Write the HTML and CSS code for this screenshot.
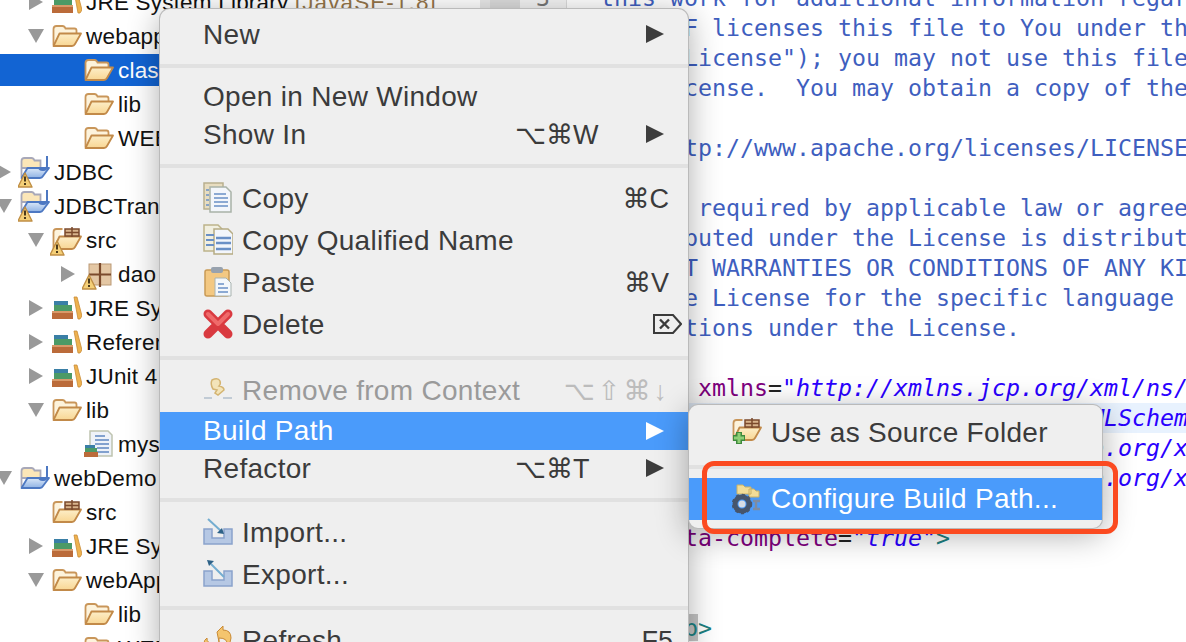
FILE: index.html
```html
<!DOCTYPE html>
<html lang="en">
<head>
<meta charset="utf-8">
<title>Eclipse context menu</title>
<link rel="stylesheet" href="styles.css">
</head>
<body>
<svg class="defs" width="0" height="0" aria-hidden="true">
  <defs>
    <linearGradient id="fg" x1="0" y1="0" x2="0" y2="1"><stop offset="0" stop-color="#fdeec8"/><stop offset="1" stop-color="#f8d693"/></linearGradient>
    <linearGradient id="bl" x1="0" y1="0" x2="0" y2="1"><stop offset="0" stop-color="#dbe8f8"/><stop offset="1" stop-color="#8fb2e4"/></linearGradient>
    <symbol id="folder" viewBox="0 0 30 24">
      <path d="M1.500 21V5q0-3 3-3h6q2 0 3 2.500h9q2 0 2 2V9" fill="#fdf3dc" stroke="#c9965a" stroke-width="1.800"/>
      <path d="M1.500 22 7.500 9.500H29L23 20q-1 2-3 2Z" fill="url(#fg)" stroke="#c28a49" stroke-width="1.800" stroke-linejoin="round"/>
    </symbol>
    <symbol id="warn" viewBox="0 0 32 32">
      <path d="M7 17 14 31H0Z" fill="#f4cf77" stroke="#c08f45" stroke-width="1.400" stroke-linejoin="round"/>
      <path d="M7 20.500v5M7 27v2" stroke="#3a2a12" stroke-width="1.800"/>
    </symbol>
    <symbol id="project" viewBox="0 0 30 24">
      <path d="M1.500 21V5q0-3 3-3h7q2 0 3 2.500h6V12H1.500Z" fill="#fbe6b8" stroke="#a8a8b8" stroke-width="1.800"/>
      <path d="M1.500 22 7.500 12H29L23 20q-1 2-3 2Z" fill="url(#bl)" stroke="#4d78c2" stroke-width="1.800" stroke-linejoin="round"/>
      <path d="M27 0v10q0 4-4 4t-4-3" fill="none" stroke="#4d78c2" stroke-width="2"/>
    </symbol>
    <symbol id="project-warn" viewBox="0 0 32 32">
      <use href="#project" x="2" y="0" width="30" height="24"/><use href="#warn" width="32" height="32"/>
    </symbol>
    <symbol id="jars" viewBox="0 0 30 24">
      <path d="M22 1h3l5 19-2 3h-2Z" fill="#eeb24f" stroke="#c98a35" stroke-width=".8"/>
      <rect x="2" y="5" width="14" height="4" fill="#3a7fa6"/>
      <rect x="2" y="9" width="18" height="6" fill="#4c9a66"/>
      <rect x="0" y="15" width="21" height="8" fill="#bb6b3a"/>
      <rect x="0" y="15" width="21" height="2" fill="#d89a6a"/>
    </symbol>
    <symbol id="pkg" viewBox="0 0 30 24">
      <rect x="5" y="1" width="22" height="21" fill="#e4c7a4" stroke="#bb9a76"/>
      <path d="M16 0v24M5 11.500h22" stroke="#7b4a2c" stroke-width="2.200"/>
    </symbol>
    <symbol id="pkg-warn" viewBox="0 0 32 32">
      <use href="#pkg" x="2" y="5" width="30" height="24"/><use href="#warn" width="32" height="32"/>
    </symbol>
    <symbol id="src" viewBox="0 0 30 24">
      <path d="M1.500 21V5q0-3 3-3h6" fill="#fdf3dc" stroke="#c9965a" stroke-width="1.800"/>
      <path d="M1.500 22 7.500 9.500H29L23 20q-1 2-3 2Z" fill="url(#fg)" stroke="#c28a49" stroke-width="1.800" stroke-linejoin="round"/>
      <path d="M13 2h14v7H13zM20 0v10M13 5.500h14" fill="#d8b48c" stroke="#7b4a2c" stroke-width="1.500"/>
    </symbol>
    <symbol id="src-warn" viewBox="0 0 32 32">
      <use href="#src" x="2" y="3" width="30" height="24"/><use href="#warn" width="32" height="32"/>
    </symbol>
    <symbol id="jarfile" viewBox="0 0 30 28">
      <path d="M6 1h18l4 4v21H6Z" fill="#eef2f8" stroke="#bfc4b0" stroke-width="1.500"/>
      <path d="M11 6h10M11 10h14M11 14h14M13 18h12M13 22h12" stroke="#5f86c0" stroke-width="1.500"/>
      <rect x="1" y="15" width="10" height="3" fill="#3a7fa6"/>
      <rect x="1" y="18" width="12" height="4" fill="#4c9a66"/>
      <rect x="0" y="22" width="14" height="5" fill="#bb6b3a"/>
    </symbol>
    <symbol id="m-copy" viewBox="0 0 30 32">
      <path d="M1 1h19v26H1Z" fill="#e8ddc0" stroke="#b9b08e" stroke-width="1.500"/>
      <path d="M7 5h16l5 5v20H7Z" fill="#f3f6fb" stroke="#a9b3a8" stroke-width="1.500"/>
      <path d="M11 12h12M11 16h14M11 20h14M11 24h14M3 8h3M3 13h3M3 18h3M3 23h3" stroke="#6a90c6" stroke-width="1.600"/>
    </symbol>
    <symbol id="m-copyq" viewBox="0 0 30 32">
      <path d="M1 1h14l4 4v22H1Z" fill="#f1efe0" stroke="#bdb48a" stroke-width="1.500"/>
      <path d="M11 5h14l5 5v20H11Z" fill="#f3f6fb" stroke="#b6ac84" stroke-width="1.500"/>
      <path d="M3 11h8M3 16h8M3 21h8" stroke="#6a90c6" stroke-width="2"/>
      <path d="M13 14h15M13 19h15M13 25h15" stroke="#6a90c6" stroke-width="2.400"/>
    </symbol>
    <symbol id="m-paste" viewBox="0 0 30 32">
      <rect x="2" y="4" width="24" height="26" rx="2" fill="#f3c882" stroke="#c99a56" stroke-width="1.500"/>
      <rect x="8" y="1" width="12" height="6" rx="2" fill="#98a2ae"/>
      <path d="M12 12h11l5 5v13H12Z" fill="#f3f7fb" stroke="#aab4b0"/>
      <path d="M15 18h6M15 22h10M15 26h10" stroke="#6a90c6" stroke-width="1.600"/>
    </symbol>
    <symbol id="m-del" viewBox="0 0 30 30">
      <path d="M5 5 25 25M25 5 5 25" stroke="#d93a40" stroke-width="9" stroke-linecap="round"/>
      <path d="M5 5 15 15M25 5 15 15" stroke="#ef6a6a" stroke-width="4" stroke-linecap="round"/>
    </symbol>
    <symbol id="m-remove" viewBox="0 0 30 28">
      <path d="M1 22h8M20 22h9" stroke="#a9b8c8" stroke-width="1.500"/>
      <path d="M9 4q6-3 8 1 1 3-1 5 5 1 5 4l-6 5-3-2 2-3-4-1q-3-5-1-9Z" fill="#f4e3b0" stroke="#d0aa5c" stroke-width="1.500"/>
    </symbol>
    <symbol id="m-import" viewBox="0 0 30 28">
      <path d="M1 11h8v9h12v-9h8v15H1Z" fill="#b6c8e4" stroke="#8aa3cc" stroke-width="1.500"/>
      <path d="M5 1l13 12" stroke="#74add0" stroke-width="2"/>
      <path d="M21 16l-7-1 5-5Z" fill="#2e6288"/>
    </symbol>
    <symbol id="m-export" viewBox="0 0 30 28">
      <path d="M1 11h8v9h12v-9h8v15H1Z" fill="#b6c8e4" stroke="#8aa3cc" stroke-width="1.500"/>
      <path d="M8 4l13 13" stroke="#74add0" stroke-width="2"/>
      <path d="M4 0l7 1-5 5Z" fill="#2e6288"/>
    </symbol>
    <symbol id="m-refresh" viewBox="0 0 30 28">
      <path d="M14 6 20 0v4q8 0 8 8 0 5-4 7 1-7-8-7v4Z" fill="#f4c56e" stroke="#c98a35"/>
      <path d="M14 22 8 28v-4q-8 0-7-7 0-3 3-5-1 6 10 6Z" fill="#f4c56e" stroke="#c98a35"/>
    </symbol>
    <symbol id="m-source" viewBox="0 0 30 28">
      <use href="#src" width="30" height="24"/>
      <path d="M7 14v12M1 20h12" stroke="#3f8a3e" stroke-width="6"/>
      <path d="M7 15v10M2 20h10" stroke="#8fcf76" stroke-width="3"/>
    </symbol>
    <symbol id="m-config" viewBox="0 0 30 30">
      <path d="M5 1h6l2 2h6v7H5ZM17 5h5l2 2h3v6H17Z" fill="#f1dc98" stroke="#c9b066"/>
      <circle cx="10" cy="20" r="7" fill="none" stroke="#46556c" stroke-width="5"/>
      <circle cx="10" cy="20" r="9" fill="none" stroke="#46556c" stroke-width="2.500" stroke-dasharray="3 3"/>
      <circle cx="10" cy="20" r="3.500" fill="#d5dce6"/>
      <path d="M21 17h7M21 25h7M24 17v8" stroke="#7d8ca2" stroke-width="2.500"/>
    </symbol>
    <symbol id="k-del" viewBox="0 0 29 20">
      <path d="M1 1h19l8 9-8 9H1Z" fill="none" stroke="#3b3b3b" stroke-width="2"/>
      <path d="M7 5.500 16 14.500M16 5.500 7 14.500" stroke="#3b3b3b" stroke-width="2.400"/>
    </symbol>
  </defs>
</svg>

<div class="app">
  <nav class="tree">
    <div class="row l1"><i class="tw closed"></i><svg class="ico"><use href="#jars"/></svg><span>JRE System Library <em class="deco">[JavaSE-1.8]</em></span></div>
    <div class="row l1"><i class="tw open"></i><svg class="ico"><use href="#folder"/></svg><span>webapp</span></div>
    <div class="row l2 selected"><i class="tw"></i><svg class="ico"><use href="#folder"/></svg><span>classes</span></div>
    <div class="row l2"><i class="tw"></i><svg class="ico"><use href="#folder"/></svg><span>lib</span></div>
    <div class="row l2"><i class="tw"></i><svg class="ico"><use href="#folder"/></svg><span>WEB-INF</span></div>
    <div class="row l0"><i class="tw closed"></i><svg class="ico w"><use href="#project-warn"/></svg><span>JDBC</span></div>
    <div class="row l0"><i class="tw open"></i><svg class="ico w"><use href="#project-warn"/></svg><span>JDBCTransaction</span></div>
    <div class="row l1"><i class="tw open"></i><svg class="ico w"><use href="#src-warn"/></svg><span>src</span></div>
    <div class="row l2"><i class="tw closed"></i><svg class="ico w"><use href="#pkg-warn"/></svg><span>dao</span></div>
    <div class="row l1"><i class="tw closed"></i><svg class="ico"><use href="#jars"/></svg><span>JRE System Library</span></div>
    <div class="row l1"><i class="tw closed"></i><svg class="ico"><use href="#jars"/></svg><span>Referenced Libraries</span></div>
    <div class="row l1"><i class="tw closed"></i><svg class="ico"><use href="#jars"/></svg><span>JUnit 4</span></div>
    <div class="row l1"><i class="tw open"></i><svg class="ico"><use href="#folder"/></svg><span>lib</span></div>
    <div class="row l2"><i class="tw"></i><svg class="ico tall"><use href="#jarfile"/></svg><span>mysql-connector-java.jar</span></div>
    <div class="row l0"><i class="tw open"></i><svg class="ico"><use href="#project"/></svg><span>webDemo</span></div>
    <div class="row l1"><i class="tw"></i><svg class="ico"><use href="#src"/></svg><span>src</span></div>
    <div class="row l1"><i class="tw closed"></i><svg class="ico"><use href="#jars"/></svg><span>JRE System Library</span></div>
    <div class="row l1"><i class="tw open"></i><svg class="ico"><use href="#folder"/></svg><span>webApp</span></div>
    <div class="row l2"><i class="tw"></i><svg class="ico"><use href="#folder"/></svg><span>lib</span></div>
    <div class="row l2"><i class="tw"></i><svg class="ico"><use href="#folder"/></svg><span>WEB-INF</span></div>
  </nav>

  <aside class="gutter-a"></aside>
  <aside class="gutter-b"><div class="num">3</div></aside>

  <main class="code">
    <div class="line c">  this work for additional information regarding copyright ownership.</div>
    <div class="line c">  The ASF licenses this file to You under the Apache License, Version 2.0</div>
    <div class="line c">  (the "License"); you may not use this file except in compliance with</div>
    <div class="line c">  the License.  You may obtain a copy of the License at</div>
    <div class="line c"> </div>
    <div class="line c">      http://www.apache.org/licenses/LICENSE-2.0</div>
    <div class="line c"> </div>
    <div class="line c">  Unless required by applicable law or agreed to in writing, software</div>
    <div class="line c">  distributed under the License is distributed on an "AS IS" BASIS,</div>
    <div class="line c">  WITHOUT WARRANTIES OR CONDITIONS OF ANY KIND, either express or implied.</div>
    <div class="line c">  See the License for the specific language governing permissions and</div>
    <div class="line c">  limitations under the License.</div>
    <div class="line"> </div>
    <div class="line"><span class="t">&lt;web-app</span> <span class="a">xmlns</span>=<span class="v">"http://xmlns.jcp.org/xml/ns/javaee"</span></div>
    <div class="line current">  <span class="a">xmlns:xsi</span>=<span class="v">"http://www.w3.org/2001/XMLSchema-instance"</span></div>
    <div class="line">  <span class="a">xsi:schemaLocation</span>=<span class="v">"http://xmlns.jcp.org/xml/ns/javaee</span></div>
    <div class="line"><span class="v">                      http://xmlns.jcp.org/xml/ns/javaee/web-app_3_1.xsd"</span></div>
    <div class="line">  <span class="a">version</span>=<span class="v">"3.1"</span></div>
    <div class="line">  <span class="a">metadata-complete</span>=<span class="v">"true"</span><span class="t">&gt;</span></div>
    <div class="line"> </div>
    <div class="line"> </div>
    <div class="line"><span class="t">&lt;/web-a<span class="hide">p</span><span class="match">p</span>&gt;</span></div>
  </main>

  <div class="menu">
    <div class="item"><span>New</span><i class="arrow"></i></div>
    <hr class="sep">
    <div class="item"><span>Open in New Window</span></div>
    <div class="item"><span>Show In</span><span class="keys sub">⌥⌘W</span><i class="arrow"></i></div>
    <hr class="sep">
    <div class="item big"><svg class="mi"><use href="#m-copy"/></svg><span>Copy</span><span class="keys">⌘C</span></div>
    <div class="item big"><svg class="mi"><use href="#m-copyq"/></svg><span>Copy Qualified Name</span></div>
    <div class="item big"><svg class="mi"><use href="#m-paste"/></svg><span>Paste</span><span class="keys">⌘V</span></div>
    <div class="item big"><svg class="mi"><use href="#m-del"/></svg><span>Delete</span><svg class="kdel"><use href="#k-del"/></svg></div>
    <hr class="sep">
    <div class="item big off"><svg class="mi"><use href="#m-remove"/></svg><span>Remove from Context</span><span class="keys wide">⌥⇧⌘↓</span></div>
    <div class="item on"><span>Build Path</span><i class="arrow"></i></div>
    <div class="item"><span>Refactor</span><span class="keys sub">⌥⌘T</span><i class="arrow"></i></div>
    <hr class="sep">
    <div class="item big"><svg class="mi"><use href="#m-import"/></svg><span>Import...</span></div>
    <div class="item big"><svg class="mi"><use href="#m-export"/></svg><span>Export...</span></div>
    <hr class="sep">
    <div class="item big"><svg class="mi"><use href="#m-refresh"/></svg><span>Refresh</span><span class="keys f5">F5</span></div>
  </div>

  <div class="submenu">
    <div class="item big"><svg class="mi"><use href="#m-source"/></svg><span>Use as Source Folder</span></div>
    <hr class="sep">
    <div class="item big on"><svg class="mi"><use href="#m-config"/></svg><span>Configure Build Path...</span></div>
  </div>

  <div class="callout"></div>
</div>
</body>
</html>
```

FILE: styles.css
```css
* { box-sizing: border-box; }
html, body { margin: 0; padding: 0; background: #fff; }
.defs { position: absolute; }
.app {
  position: relative;
  display: flex;
  width: 1186px;
  height: 642px;
  overflow: hidden;
  background: #fff;
}

/* project tree */
.tree {
  flex: 0 0 480px;
  margin-top: -15px;
  font: 22.5px/34px "Liberation Sans", Arial, sans-serif;
  letter-spacing: .2px;
  color: #111;
}
.row { display: flex; align-items: center; height: 34px; white-space: nowrap; overflow: hidden; }
.row > span { padding-top: 2px; line-height: 32px; }
.l0 { margin-left: -4px; }
.l1 { padding-left: 28px; }
.l2 { padding-left: 60px; }
.selected { background: linear-gradient(#fff 1px, #1264d3 1px, #1264d3 33px, #fff 33px); color: #fff; }
.tw { flex: 0 0 16px; height: 16px; margin-right: 8px; display: block; position: relative; }
.tw.closed::before {
  content: ""; position: absolute; left: 1px; top: 0;
  border-left: 14px solid #999; border-top: 8px solid transparent; border-bottom: 8px solid transparent;
}
.tw.open::before {
  content: ""; position: absolute; left: 0; top: 1px;
  border-top: 14px solid #999; border-left: 8.500px solid transparent; border-right: 8.500px solid transparent;
}
.ico { flex: none; width: 30px; height: 24px; margin-right: 4px; }
.ico.tall { height: 28px; }
.ico.w { width: 32px; height: 32px; margin-left: -2px; }
.deco { font-style: normal; color: #95754a; letter-spacing: 1.100px; }

/* editor gutters */
.gutter-a { flex: 0 0 10px; background: #e9e9e9; }
.gutter-b {
  flex: 0 0 77px;
  background: linear-gradient(90deg, #dcdcdc 30px, #f4f4f4 30px);
  border-right: 1px solid #dcdcdc;
  font: 23px/30px "DejaVu Sans Mono", monospace;
  color: #777;
  margin-right: 5px;
}
.num { margin-top: -17px; padding-left: 46px; }

/* source */
.code {
  flex: 1;
  min-width: 0;
  margin-top: -17px;
  font: 23.250px/30px "DejaVu Sans Mono", monospace;
  color: #222;
}
.line { height: 30px; white-space: pre; }
.c { color: #3f5fbf; }
.t { color: #1c8080; }
.a { color: #7f007f; }
.v { color: #2a00ff; font-style: italic; }
.current { background: #e8f2fe; }
.match { background: #c4c4c4; }
.hide { color: #1c8080; }

/* menus */
.menu, .submenu {
  position: absolute;
  background: #efefef;
  border: 1px solid rgba(0, 0, 0, .22);
  box-shadow: 0 6px 32px rgba(0, 0, 0, .32);
  font: 28px/38px "Liberation Sans", Arial, sans-serif;
  letter-spacing: .3px;
  color: #3b3b3b;
}
.menu { left: 159px; top: 8px; width: 530px; padding-top: 6px; border-radius: 11px; }
.submenu { left: 688px; top: 404px; width: 415px; height: 125px; padding-top: 6px; border-radius: 10px; }
.item { display: flex; align-items: center; height: 38px; padding: 0 24px 0 43px; white-space: nowrap; }
.item > span { padding-top: 2px; line-height: 36px; }
.item.on > span { padding-top: 0; }
.item.big { height: 42px; }
.mi { flex: none; width: 30px; height: 32px; margin-right: 9px; }
.sep { height: 4px; margin: 11px 0 9px; border: 0; background: #e1e1e1; }
.submenu .sep { margin: 12px 0 9px; }
.off { color: #9a9a9a; }
.off .mi { opacity: .85; }
.off .keys { color: #bcbcbc; }
.on { background: #4a9bfb; color: #fff; }
.menu .on { margin: 1px 0 -1px; }
.on .arrow { border-left-color: #fff; }
.arrow {
  flex: none;
  display: block;
  width: 0; height: 0;
  border-left: 18px solid #3d3d3d;
  border-top: 9.500px solid transparent;
  border-bottom: 9.500px solid transparent;
}
.item > .arrow:nth-child(2) { margin-left: auto; }
.keys {
  margin-left: auto;
  margin-right: -5px;
  font-family: "Liberation Sans", "DejaVu Sans", sans-serif;
  font-size: 27px;
  letter-spacing: 0;
}
.keys.sub { flex: 0 0 131px; margin-right: 0; }
.keys.wide { margin-right: -6px; letter-spacing: 3px; }
.keys.f5 { margin-right: -9px; }
.kdel { flex: none; width: 29px; height: 20px; margin-left: auto; margin-right: -18px; }

/* red annotation */
.callout {
  position: absolute;
  left: 702px;
  top: 461px;
  width: 416px;
  height: 73px;
  border: 5px solid #fb4a20;
  border-radius: 12px;
}
```
